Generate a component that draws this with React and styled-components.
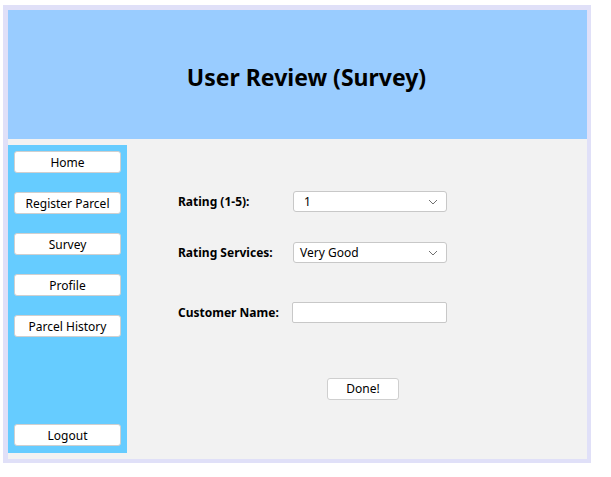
import React from "react";
import styled, { createGlobalStyle } from "styled-components";

const GlobalStyle = createGlobalStyle`
	body {
		margin: 0;
		background: #ffffff;
		font-family: "Noto Sans", "Open Sans", sans-serif;
		color: #000000;
	}
`;

const Frame = styled.div`
	box-sizing: border-box;
	margin: 5px 0 0 3px;
	width: 588px;
	height: 458px;
	border-style: solid;
	border-color: #e0e0f8;
	border-width: 5px 4px 4px 5px;
	display: flex;
	flex-direction: column;
	background-color: #f2f2f2;
`;

const Header = styled.div`
	height: 129px;
	background-color: #99ccff;
	display: flex;
	align-items: center;
	justify-content: center;
	padding: 5px 0 0 18px;
	box-sizing: border-box;
`;

const Title = styled.h1`
	margin: 0;
	font-size: 23px;
	font-weight: 700;
`;

const Body = styled.div`
	flex: 1;
	display: flex;
	align-items: flex-start;
`;

const Sidebar = styled.div`
	box-sizing: border-box;
	margin-top: 6px;
	width: 119px;
	height: 308px;
	background-color: #66ccff;
	padding: 6px 6px 7px 6px;
	display: flex;
	flex-direction: column;
	gap: 19px;
`;

const Button = styled.button`
	box-sizing: border-box;
	height: 22px;
	width: ${({ $width }) => $width || "107px"};
	padding: 0;
	background-color: #ffffff;
	border: 1px solid #cfcfcf;
	border-radius: 3px;
	font-family: "Noto Sans", sans-serif;
	font-size: 12px;
	color: #000000;
	margin-top: ${({ $push }) => ($push ? "auto" : "0")};
`;

const Form = styled.div`
	padding-left: 51px;
	display: flex;
	flex-direction: column;
`;

const Row = styled.div`
	display: flex;
	align-items: center;
	margin-top: ${({ $mt }) => $mt}px;
`;

const Label = styled.span`
	width: 115px;
	font-size: 12px;
	font-weight: 700;
`;

const Select = styled.div`
	box-sizing: border-box;
	width: 154px;
	height: 21px;
	background-color: #ffffff;
	border: 1px solid #c8c8c8;
	border-radius: 3px;
	display: flex;
	align-items: center;
	justify-content: space-between;
	padding: 0 8px 0 ${({ $pad }) => $pad}px;
	font-size: 12px;
`;

const Input = styled.input`
	box-sizing: border-box;
	width: 155px;
	height: 21px;
	margin-left: -1px;
	background-color: #ffffff;
	border: 1px solid #c8c8c8;
	border-radius: 2px;
	outline: none;
`;

const Actions = styled.div`
	margin-top: 53px;
	padding-left: 149px;
`;

const Chevron = () => (
	<svg width="10" height="6" viewBox="0 0 10 6">
		<path d="M1 1 L5 5 L9 1" fill="none" stroke="#707070" strokeWidth="1" />
	</svg>
);

const navItems = ["Home", "Register Parcel", "Survey", "Profile", "Parcel History"];

const App = () => {
	return (
		<>
			<GlobalStyle />
			<Frame>
				<Header>
					<Title>User Review (Survey)</Title>
				</Header>
				<Body>
					<Sidebar>
						{navItems.map((item) => (
							<Button key={item}>{item}</Button>
						))}
						<Button $push>Logout</Button>
					</Sidebar>
					<Form>
						<Row $mt={52}>
							<Label>Rating (1-5):</Label>
							<Select $pad={10}>
								1
								<Chevron />
							</Select>
						</Row>
						<Row $mt={30}>
							<Label>Rating Services:</Label>
							<Select $pad={6}>
								Very Good
								<Chevron />
							</Select>
						</Row>
						<Row $mt={39}>
							<Label>Customer Name:</Label>
							<Input />
						</Row>
						<Actions>
							<Button $width="72px">Done!</Button>
						</Actions>
					</Form>
				</Body>
			</Frame>
		</>
	);
};

export default App;
